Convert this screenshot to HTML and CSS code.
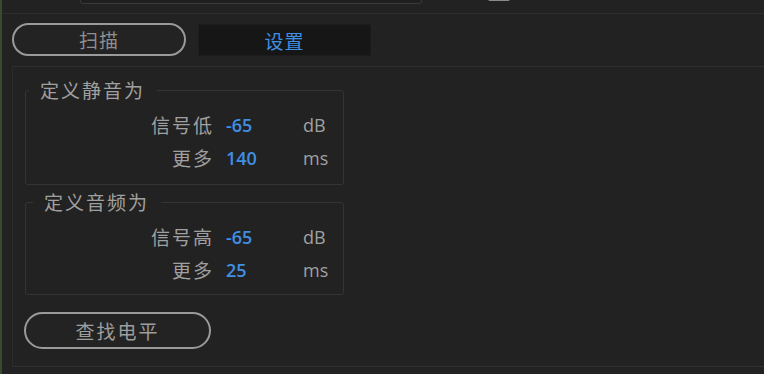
FILE: index.html
```html
<!DOCTYPE html>
<html lang="zh-CN">
<head>
<meta charset="utf-8">
<link rel="stylesheet" href="styles.css">
</head>
<body>
<div class="app">
  <div class="topstrip">
    <div class="field"></div>
    <div class="check"></div>
  </div>
  <div class="tabs">
    <button class="tab tab-outline">扫描</button>
    <button class="tab tab-active">设置</button>
  </div>
  <div class="panel">
    <fieldset class="group">
      <legend>定义静音为</legend>
      <div class="row"><span class="label">信号低</span><span class="value">-65</span><span class="unit">dB</span></div>
      <div class="row"><span class="label">更多</span><span class="value">140</span><span class="unit">ms</span></div>
    </fieldset>
    <fieldset class="group group2">
      <legend>定义音频为</legend>
      <div class="row"><span class="label">信号高</span><span class="value">-65</span><span class="unit">dB</span></div>
      <div class="row"><span class="label">更多</span><span class="value">25</span><span class="unit">ms</span></div>
    </fieldset>
    <button class="pill">查找电平</button>
  </div>
</div>
</body>
</html>
```
FILE: styles.css
```css
html, body {
  margin: 0;
  padding: 0;
  background: #222222;
  height: 100%;
  overflow: hidden;
}
.app {
  height: 374px;
  border-left: 2px solid #3a4a2c;
  box-sizing: border-box;
  font-family: "Noto Sans CJK SC", "Noto Sans", sans-serif;
  color: #a0a0a0;
}
.topstrip {
  position: relative;
  height: 13px;
  border-bottom: 1px solid #2e2e2e;
}
.field {
  position: absolute;
  left: 78px;
  top: -6px;
  width: 340px;
  height: 8px;
  border: 1px solid #3a3a3a;
  border-radius: 3px;
  background: #1f1f1f;
}
.check {
  position: absolute;
  left: 486px;
  top: -8px;
  width: 22px;
  height: 9px;
  border-radius: 2px;
  background: #8a8a8a;
}
.tabs {
  display: flex;
  gap: 12px;
  padding: 9px 0 0 10px;
  height: 34px;
}
.tab {
  font-family: "Noto Sans CJK SC", sans-serif;
  font-size: 19px;
  letter-spacing: 1px;
  line-height: 1;
  padding: 0;
  width: 174px;
  height: 33px;
  box-sizing: border-box;
}
.tab-outline {
  background: #232323;
  border: 2px solid #9a9a9a;
  border-radius: 17px;
  color: #8e8e8e;
}
.tab-active {
  margin-top: 1px;
  height: 32px;
  width: 173px;
  background: #161616;
  border: 1px solid #1c1c1c;
  border-radius: 2px;
  color: #3f8fe4;
}
.panel {
  margin: 9px 0 0 10px;
  height: 301px;
  border-top: 1px solid #2f2f2f;
  border-left: 1px solid #2c2c2c;
  border-bottom: 1px solid #303030;
  padding: 13px 0 0 12px;
  box-sizing: border-box;
  display: flex;
  flex-direction: column;
  align-items: flex-start;
}
.group {
  margin: 0;
  width: 319px;
  box-sizing: border-box;
  border: 1px solid #343434;
  border-radius: 3px;
  padding: 8px 0 10px 0;
  min-inline-size: 0;
}
.group2 {
  margin-top: 7px;
  padding-bottom: 8px;
}
.group legend {
  font-size: 19px;
  line-height: 20px;
  letter-spacing: 2px;
  padding: 0 12px 0 11px;
  margin-left: 3px;
  color: #a0a0a0;
}
.group2 legend {
  margin-left: 7px;
}
.row {
  display: grid;
  grid-template-columns: 186px 63px 40px;
  column-gap: 14px;
  height: 33px;
  align-items: center;
  font-size: 19px;
}
.label {
  text-align: right;
  letter-spacing: 2px;
  margin-right: -2px;
  color: #a0a0a0;
}
.value {
  font-family: "Open Sans", "Liberation Sans", sans-serif;
  font-size: 18px;
  font-weight: 600;
  color: #3f8fe4;
}
.unit {
  font-family: "Open Sans", "Liberation Sans", sans-serif;
  font-size: 18px;
  color: #a0a0a0;
}
.pill {
  margin-top: 17px;
  margin-left: -1px;
  width: 187px;
  height: 37px;
  border: 2px solid #9a9a9a;
  border-radius: 19px;
  background: #232323;
  color: #9e9e9e;
  font-family: "Noto Sans CJK SC", sans-serif;
  font-size: 19px;
  letter-spacing: 2px;
  padding: 0;
}
```
